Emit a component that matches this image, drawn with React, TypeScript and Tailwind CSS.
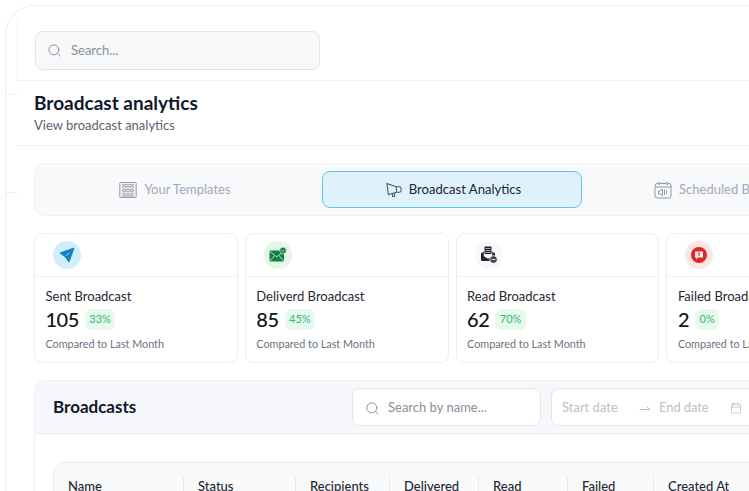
import { Search, Calendar } from 'lucide-react';

const font = "font-['Lato','Noto_Sans',sans-serif]";

function TemplatesIcon() {
  return (
    <svg width="18" height="18" viewBox="0 0 18 18" fill="none" stroke="#8b8f98" strokeWidth="0.9">
      <rect x="0.800" y="1.500" width="16.400" height="15" rx="1" fill="#f1f2f5" />
      <path d="M3 3.800h12M3 5.800h12M3 13h12M3 15h12" />
      <circle cx="5" cy="9.500" r="1.500" />
      <circle cx="9" cy="9.500" r="1.500" />
      <circle cx="13" cy="9.500" r="1.500" />
    </svg>
  );
}

function MegaphoneIcon() {
  return (
    <svg width="16" height="16" viewBox="0 0 17 16" fill="none" stroke="#4b5563" strokeWidth="1.100" strokeLinejoin="round">
      <path d="M1 1 11 4.500v6L2.500 13z" />
      <path d="M11 4.500h3a2 2 0 0 1 2 2v2a2 2 0 0 1-2 2h-3" />
      <path d="M7 11.500V15h2l.5-3.800" />
    </svg>
  );
}

function ScheduleIcon() {
  return (
    <svg width="18" height="18" viewBox="0 0 18 18" fill="none" stroke="#9097a3" strokeWidth="1">
      <rect x="1" y="2.500" width="16" height="14.500" rx="2" />
      <path d="M1 6h16" />
      <circle cx="5" cy="2.500" r="1" fill="#f8f9fb" />
      <circle cx="13" cy="2.500" r="1" fill="#f8f9fb" />
      <path d="M4.500 10v2.500H6l2.500 2V8L6 10zM10.500 8.500v5.500M12.500 9.500v3.500" />
    </svg>
  );
}

function SentIcon() {
  return (
    <svg width="16" height="16" viewBox="0 0 16 16">
      <path d="M15 1 1 6l5.200 3.800L10 15z" fill="#0f85bd" stroke="#0f85bd" strokeLinejoin="round" />
      <path d="M7 9l3-3" stroke="#d3eefa" strokeWidth="0.800" />
    </svg>
  );
}

function DeliveredIcon() {
  return (
    <svg width="18" height="16" viewBox="0 0 18 16">
      <rect x="0.500" y="3.500" width="14.500" height="11" rx="1" fill="#15803d" />
      <path d="M1 4.500 7.700 10 14.500 4.500M1 14l4.500-5.500M14.500 14 10 8.500" fill="none" stroke="#dcf5e4" strokeWidth="0.800" />
      <circle cx="14" cy="3.500" r="3.300" fill="#15803d" stroke="#e8f6ec" strokeWidth="0.600" />
      <path d="M12.500 3.500l1.100 1.100 2-2" fill="none" stroke="#fff" strokeWidth="0.800" />
    </svg>
  );
}

function ReadIcon() {
  return (
    <svg width="18" height="18" viewBox="0 0 18 18">
      <path d="M4.500 0.500h7V8h-7z" fill="#27272a" />
      <path d="M5.500 2.500h5M5.500 4.500h5M5.500 6.500h5" stroke="#fff" strokeWidth="0.600" />
      <path d="M1 7.500 3.800 5.500v4.700l4.200 2.600 4.200-2.600V5.500l2.800 2V14a1 1 0 0 1-1 1H2a1 1 0 0 1-1-1z" fill="#27272a" />
      <circle cx="13.500" cy="13.500" r="3.800" fill="#3f3f46" stroke="#f8f9fc" strokeWidth="0.800" />
      <path d="M11.500 13.500h4" stroke="#fff" strokeWidth="0.800" />
    </svg>
  );
}

function FailedIcon() {
  return (
    <svg width="16" height="16" viewBox="0 0 16 16">
      <circle cx="8" cy="8" r="8" fill="#dc2626" />
      <path d="M4 4.500h8V10.500H7L5 12.200V10.500H4z" fill="#fde8e8" />
      <rect x="7.400" y="5.500" width="1.300" height="3.200" fill="#dc2626" />
    </svg>
  );
}

function HalfArrow() {
  return (
    <svg width="12" height="8" viewBox="0 0 12 8" fill="none" stroke="#b5b9c0" strokeWidth="1">
      <path d="M0.500 5.500h10.500L8 3" />
    </svg>
  );
}

const cards = [
  { title: 'Sent Broadcast', value: '105', pct: '33%', circle: 'bg-[#d3eefa]', icon: <SentIcon /> },
  { title: 'Deliverd Broadcast', value: '85', pct: '45%', circle: 'bg-[#e6f5ea]', icon: <DeliveredIcon /> },
  { title: 'Read Broadcast', value: '62', pct: '70%', circle: 'bg-[#f6f7fb]', icon: <ReadIcon /> },
  { title: 'Failed Broadcast', value: '2', pct: '0%', circle: 'bg-[#fbe6e6]', icon: <FailedIcon /> },
];

const columns = [
  { label: 'Name', width: 'w-[129px]' },
  { label: 'Status', width: 'w-[112px]' },
  { label: 'Recipients', width: 'w-[94px]' },
  { label: 'Delivered', width: 'w-[89px]' },
  { label: 'Read', width: 'w-[89px]' },
  { label: 'Failed', width: 'w-[86px]' },
  { label: 'Created At', width: 'w-[130px]' },
];

export default function App() {
  return (
    <div className={`${font} relative h-[491px] w-[749px] overflow-hidden bg-white pl-[5px] pt-[5px]`}>
      <div className="flex h-[600px] w-[1000px] rounded-tl-[30px] border-l border-t border-[#eceef5]">
        <div className="flex w-[11px] shrink-0 flex-col">
          <div className="mt-[88px] h-px bg-[#eceef5]" />
          <div className="mt-[97px] h-px bg-[#eceef5]" />
        </div>

        <div className="min-w-0 flex-1">
          <div className="mt-[14px] h-[61px] border-b border-l border-[#f1f2f6] pl-[17px] pt-[11px]">
            <div className="flex h-[39px] w-[285px] items-center gap-[9px] rounded-lg border border-[#e2e5ec] bg-[#f7f8fa] pl-[11px]">
              <Search size={15} strokeWidth={1.5} className="text-[#8a9099]" />
              <span className="text-[13px] text-[#8a8f98]">Search...</span>
            </div>
          </div>

          <div className="h-[65px] border-b border-[#eef0f4] pl-[17px] pt-[11px]">
            <h1 className="text-[19px] font-bold leading-[22px] text-[#10182b]">Broadcast analytics</h1>
            <p className="mt-[2px] text-[13px] leading-[18px] text-[#5b6370]">View broadcast analytics</p>
          </div>

          <div className="pl-[17px] pt-[17px]">
            <div className="grid h-[53px] w-[836px] grid-cols-3 items-center gap-[17px] rounded-xl border border-[#eef0f4] bg-[#f8f9fb] px-[10px]">
              <div className="flex items-center justify-center gap-[7px]">
                <TemplatesIcon />
                <span className="text-[13px] text-[#a3a8b8]">Your Templates</span>
              </div>
              <div className="flex h-[37px] items-center justify-center gap-[7px] rounded-lg border border-[#62c3ed] bg-[#dff2fb] pl-[3px]">
                <MegaphoneIcon />
                <span className="text-[13.100px] text-[#1d2433]">Broadcast Analytics</span>
              </div>
              <div className="flex items-center justify-center gap-[7px]">
                <ScheduleIcon />
                <span className="text-[13px] text-[#a3a8b8]">Scheduled Broadcasts</span>
              </div>
            </div>

            <div className="mt-[17px] flex gap-[7px]">
              {cards.map((card) => (
                <div key={card.title} className="h-[130px] w-[203.800px] shrink-0 rounded-lg border border-[#eceef2] bg-white">
                  <div className="flex h-[43px] items-center border-b border-[#f1f2f5] pl-[18px]">
                    <div className={`flex h-[28px] w-[28px] items-center justify-center rounded-full ${card.circle}`}>
                      {card.icon}
                    </div>
                  </div>
                  <div className="pl-[10.500px] pt-[10px]">
                    <div className="text-[13px] leading-[18px] text-[#1f2733]">{card.title}</div>
                    <div className="mt-[3px] flex h-[22px] items-center gap-[6px]">
                      <span className="text-[20px] font-medium tracking-[-0.500px] text-[#0f1420]">{card.value}</span>
                      <span className="flex h-[21px] items-center rounded-md bg-[#e7f9ee] px-[4.500px] text-[11px] text-[#2fb96b]">{card.pct}</span>
                    </div>
                    <div className="mt-[6px] text-[10.800px] leading-[16px] text-[#6b7280]">Compared to Last Month</div>
                  </div>
                </div>
              ))}
            </div>

            <div className="mt-[17px] w-[900px] rounded-t-xl border-x border-t border-[#eef0f4]">
              <div className="flex h-[53px] items-center rounded-t-xl border-b border-[#e9ebf0] bg-[#f6f7fa] pl-[18px]">
                <h2 className="w-[299px] text-[17px] font-bold text-[#10182b]">Broadcasts</h2>
                <div className="flex h-[38px] w-[189px] items-center gap-[8px] rounded-lg border border-[#e3e5ec] bg-white pl-[12px] pt-[2px]">
                  <Search size={15} strokeWidth={1.5} className="text-[#8a9099]" />
                  <span className="text-[13px] text-[#8a8f98]">Search by name...</span>
                </div>
                <div className="ml-[10px] flex h-[38px] w-[240px] items-center rounded-lg border border-[#e3e5ec] bg-white pl-[10px] pt-[2px] text-[13px] text-[#bcc0c7]">
                  <span className="w-[77px]">Start date</span>
                  <HalfArrow />
                  <span className="ml-[8px] w-[71px] tracking-[-0.100px]">End date</span>
                  <Calendar size={12} strokeWidth={1.25} className="text-[#a9adb5]" />
                </div>
              </div>

              <div className="pl-[18px] pt-[28px]">
                <div className="flex h-[60px] w-[860px] rounded-t-xl border-x border-t border-[#eceef2] bg-[#f9fafb] pt-[13px]">
                  {columns.map((col, i) => (
                    <div
                      key={col.label}
                      className={`${col.width} h-full pl-[14px] pt-[1px] text-[13px] font-medium text-[#1f2733] ${i > 0 ? 'border-l border-[#e9ebef]' : ''}`}
                    >
                      {col.label}
                    </div>
                  ))}
                </div>
              </div>
            </div>
          </div>
        </div>
      </div>
    </div>
  );
}
